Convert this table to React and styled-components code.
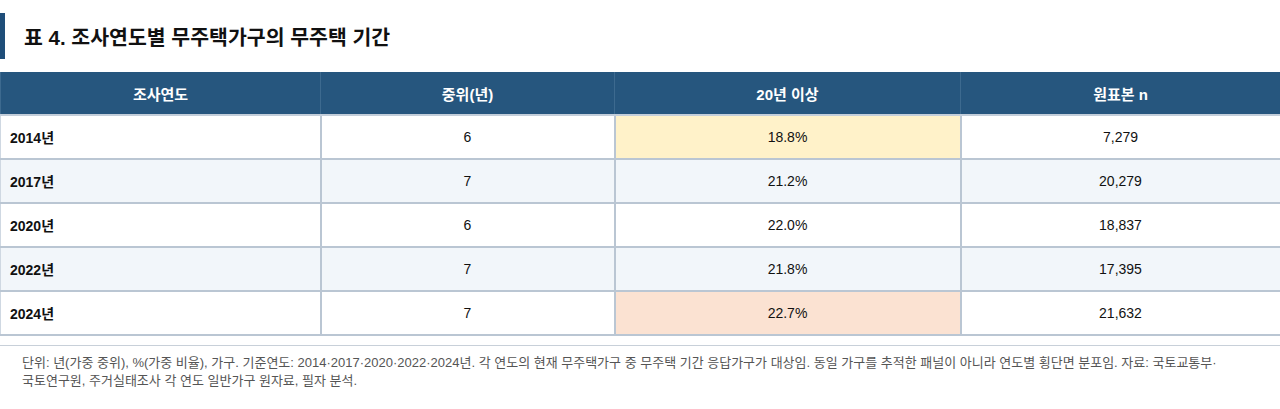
import React from 'react';
import styled, { createGlobalStyle } from 'styled-components';

const GlobalStyle = createGlobalStyle`
  body {
    margin: 0;
    background: #ffffff;
    font-family: "Liberation Sans", "Noto Sans CJK KR", sans-serif;
    color: #111;
  }
`;

const Page = styled.div`
  width: 1280px;
  padding-top: 13px;
`;

const Title = styled.h2`
  margin: 0;
  height: 46px;
  display: flex;
  align-items: center;
  padding-left: 19px;
  border-left: 5px solid #1f4e79;
  font-size: 20.5px;
  font-weight: 700;
  color: #111;
`;

const Table = styled.table`
  margin-top: 13px;
  width: 100%;
  border-collapse: collapse;
  table-layout: fixed;
  font-size: 14px;
`;

const Head = styled.th`
  height: 42px;
  padding: 0;
  background: #26567e;
  color: #ffffff;
  font-weight: 700;
  font-size: 15px;
  text-align: center;
  border-left: 1px solid #3d6a8f;
  border-right: 1px solid #3d6a8f;
  border-bottom: 2px solid #c3ceda;
`;

const Row = styled.tr`
  background: ${(p) => (p.$alt ? '#f2f6fa' : '#ffffff')};
`;

const Cell = styled.td`
  height: 42px;
  padding: 0 9px;
  border: 2px solid #bac6d3;
  border-top: none;
  text-align: ${(p) => (p.$first ? 'left' : 'center')};
  font-weight: ${(p) => (p.$first ? 700 : 400)};
  background: ${(p) => p.$tone || 'transparent'};
  color: #111;

  &:first-child {
    border-left: 1px solid #cfd8e2;
  }
`;

const Rule = styled.div`
  margin-top: 9px;
  border-top: 1px solid #c8d0d9;
`;

const Note = styled.p`
  margin: 0;
  padding: 8px 14px 0 22px;
  font-size: 13px;
  line-height: 18px;
  color: #555;
  word-break: keep-all;
`;

const rows = [
  { year: '2014년', mid: '6', over: '18.8%', n: '7,279', tone: '#fff2c9' },
  { year: '2017년', mid: '7', over: '21.2%', n: '20,279' },
  { year: '2020년', mid: '6', over: '22.0%', n: '18,837' },
  { year: '2022년', mid: '7', over: '21.8%', n: '17,395' },
  { year: '2024년', mid: '7', over: '22.7%', n: '21,632', tone: '#fbe2d2' },
];

export default function App() {
  return (
    <Page>
      <GlobalStyle />
      <Title>표 4. 조사연도별 무주택가구의 무주택 기간</Title>
      <Table>
        <colgroup>
          <col style={{ width: '320px' }} />
          <col style={{ width: '294px' }} />
          <col style={{ width: '346px' }} />
          <col style={{ width: '320px' }} />
        </colgroup>
        <thead>
          <tr>
            <Head>조사연도</Head>
            <Head>중위(년)</Head>
            <Head>20년 이상</Head>
            <Head>원표본 n</Head>
          </tr>
        </thead>
        <tbody>
          {rows.map((r, i) => (
            <Row key={r.year} $alt={i % 2 === 1}>
              <Cell $first>{r.year}</Cell>
              <Cell>{r.mid}</Cell>
              <Cell $tone={r.tone}>{r.over}</Cell>
              <Cell>{r.n}</Cell>
            </Row>
          ))}
        </tbody>
      </Table>
      <Rule />
      <Note>
        단위: 년(가중 중위), %(가중 비율), 가구. 기준연도: 2014·2017·2020·2022·2024년. 각 연도의 현재 무주택가구 중 무주택 기간 응답가구가 대상임. 동일 가구를 추적한 패널이 아니라 연도별 횡단면 분포임. 자료: 국토교통부·국토연구원, 주거실태조사 각 연도 일반가구 원자료, 필자 분석.
      </Note>
    </Page>
  );
}
